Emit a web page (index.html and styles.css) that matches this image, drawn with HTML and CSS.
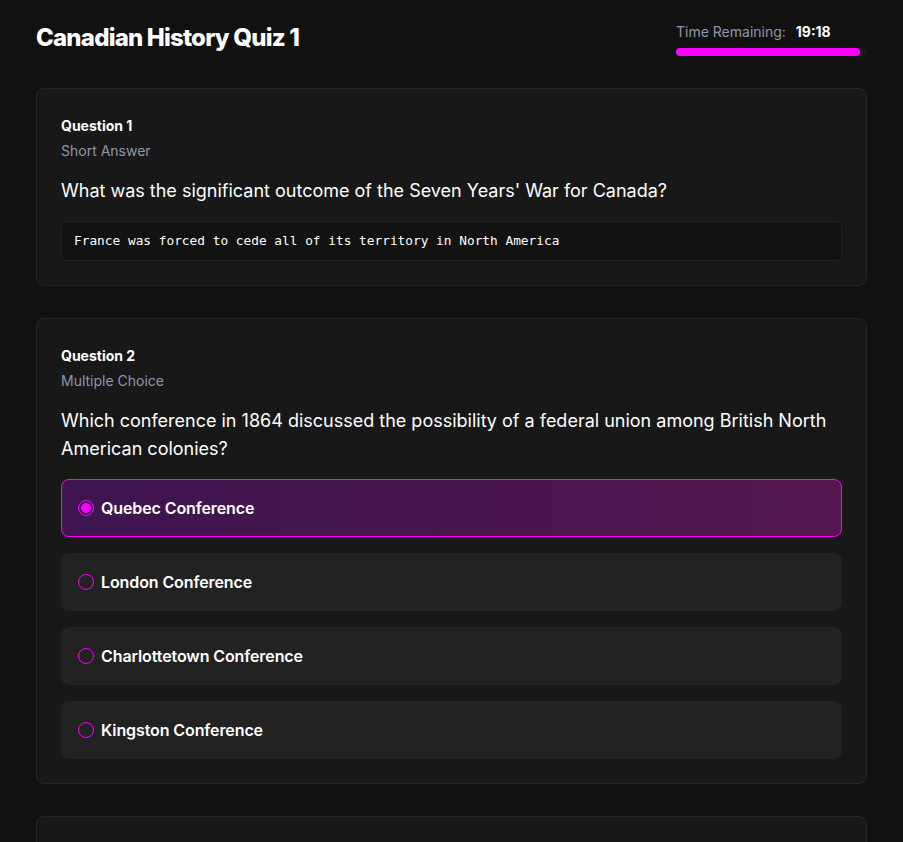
FILE: index.html
```html
<!DOCTYPE html>
<html lang="en">
<head>
  <meta charset="UTF-8" />
  <meta name="viewport" content="width=device-width, initial-scale=1.0" />
  <title>Canadian History Quiz 1</title>
  <link rel="stylesheet" href="styles.css">
</head>
<body>
  <div class="page">
    <header class="top">
      <h1>Canadian History Quiz 1</h1>
      <div class="timer">
        <div class="timer-text">Time Remaining: <strong>19:18</strong></div>
        <div class="track"><div class="fill" style="width:96.5%"></div></div>
      </div>
    </header>

    <section class="card">
      <div class="q-num">Question 1</div>
      <div class="q-type">Short Answer</div>
      <p class="q-text">What was the significant outcome of the Seven Years' War for Canada?</p>
      <div class="answer">France was forced to cede all of its territory in North America</div>
    </section>

    <section class="card">
      <div class="q-num">Question 2</div>
      <div class="q-type">Multiple Choice</div>
      <p class="q-text">Which conference in 1864 discussed the possibility of a federal union among British North American colonies?</p>
      <div class="options">
        <div class="option selected"><span class="radio"></span>Quebec Conference</div>
        <div class="option"><span class="radio"></span>London Conference</div>
        <div class="option"><span class="radio"></span>Charlottetown Conference</div>
        <div class="option"><span class="radio"></span>Kingston Conference</div>
      </div>
    </section>

    <section class="card card-last"></section>
  </div>
</body>
</html>
```

FILE: styles.css
```css
body {
  margin: 0;
  background-color: #111;
  color: #fff;
  font-family: Inter, "Noto Sans", sans-serif;
}
.page {
  padding: 0 36px 40px;
}
.top {
  display: flex;
  justify-content: space-between;
  align-items: flex-start;
  padding: 22px 0 32px;
}
h1 {
  margin: 0;
  font-size: 24px;
  font-weight: 800;
  letter-spacing: -0.8px;
  line-height: 32px;
}
.timer {
  width: 191px;
}
.timer-text {
  color: #8e97ab;
  font-size: 14px;
  line-height: 20px;
}
.timer-text strong {
  color: #fff;
  margin-left: 6px;
}
.track {
  margin-top: 6px;
  height: 8px;
  border-radius: 4px;
  background-color: #1a1a1a;
}
.fill {
  height: 100%;
  border-radius: 4px;
  background-color: #ff00ff;
}
.card {
  background-color: #181818;
  border: 1px solid #262626;
  border-radius: 8px;
  padding: 27px 24px 24px;
  margin-bottom: 32px;
}
.card-last {
  height: 60px;
}
.q-num {
  font-size: 14px;
  font-weight: 700;
  line-height: 20px;
}
.q-type {
  color: #8e97ab;
  font-size: 14px;
  line-height: 20px;
  margin-top: 5px;
}
.q-text {
  font-size: 18px;
  line-height: 28px;
  margin: 16px 0 16px;
}
.answer {
  background-color: #121212;
  border: 1px solid #232323;
  border-radius: 6px;
  padding: 10px 12px;
  font-family: "DejaVu Sans Mono", monospace;
  font-size: 12.8px;
  line-height: 18px;
}
.options {
  display: flex;
  flex-direction: column;
  gap: 16px;
}
.option {
  display: flex;
  align-items: center;
  gap: 7px;
  height: 58px;
  padding: 0 16px;
  box-sizing: border-box;
  background-color: #222;
  border: 1px solid transparent;
  border-radius: 8px;
  font-size: 16px;
  font-weight: 600;
  letter-spacing: -0.1px;
}
.option.selected {
  background: linear-gradient(90deg, #3d154f, #541650);
  border-color: #ff00ff;
}
.radio {
  width: 16px;
  height: 16px;
  box-sizing: border-box;
  border: 1.5px solid #ff00ff;
  border-radius: 50%;
  position: relative;
}
.option.selected .radio::after {
  content: "";
  position: absolute;
  inset: 2px;
  border-radius: 50%;
  background-color: #ff00ff;
}
```
